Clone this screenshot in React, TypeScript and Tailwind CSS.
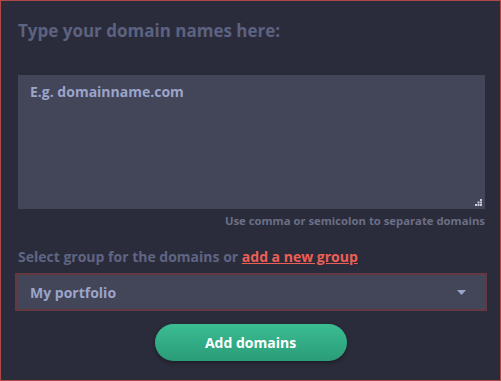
export default function App() {
  return (
    <div
      className="h-[381px] w-[501px] border border-[#b04848] bg-[#2b2c3b] px-[17px] pt-[17px]"
      style={{ fontFamily: '"Open Sans", "Noto Sans", sans-serif' }}
    >
      <h1 className="text-[17px] font-bold leading-[25px] text-[#5c6280]">
        Type your domain names here:
      </h1>
      <div className="relative mt-[32px] h-[134px] w-[467px] bg-[#434559]">
        <textarea
          placeholder="E.g. domainname.com"
          className="h-full w-full resize-none bg-transparent px-[12px] py-[6px] text-[14px] font-bold text-[#9ba4c9] outline-none placeholder:text-[#9ba4c9]"
        />
        <svg
          className="pointer-events-none absolute bottom-[3px] right-[3px]"
          width="7"
          height="7"
          viewBox="0 0 7 7"
        >
          <rect x="5" y="0" width="2" height="2" fill="#c8cbd8" />
          <rect x="2.5" y="2.5" width="2" height="2" fill="#c8cbd8" />
          <rect x="5" y="2.5" width="2" height="2" fill="#c8cbd8" />
          <rect x="0" y="5" width="2" height="2" fill="#c8cbd8" />
          <rect x="2.5" y="5" width="2" height="2" fill="#c8cbd8" />
          <rect x="5" y="5" width="2" height="2" fill="#c8cbd8" />
        </svg>
      </div>
      <p className="mt-[3px] w-[467px] text-right text-[11.3px] font-bold leading-[18px] text-[#6a6f86]">
        Use comma or semicolon to separate domains
      </p>
      <p className="mt-[17px] text-[14px] font-bold leading-[20px] text-[#5f6583]">
        Select group for the domains or{" "}
        <a href="#" className="text-[#ec5f55] underline">
          add a new group
        </a>
      </p>
      <div className="-ml-[3px] mt-[6px] flex h-[38px] w-[472px] items-center justify-between border-2 border-[#633840] bg-[#434559] pl-[13px] pr-[19px]">
        <span className="text-[14px] font-bold text-[#9ba4c9]">My portfolio</span>
        <svg width="9" height="5" viewBox="0 0 9 5">
          <path d="M0 0 H9 L4.5 5 Z" fill="#9ba4c9" />
        </svg>
      </div>
      <div className="mt-[13px] flex justify-center">
        <button className="h-[37px] w-[192px] rounded-full bg-gradient-to-b from-[#3bbd92] to-[#2a9c78] text-[14px] font-bold text-white shadow-[0_2px_4px_rgba(0,0,0,0.35)]">
          Add domains
        </button>
      </div>
    </div>
  );
}
